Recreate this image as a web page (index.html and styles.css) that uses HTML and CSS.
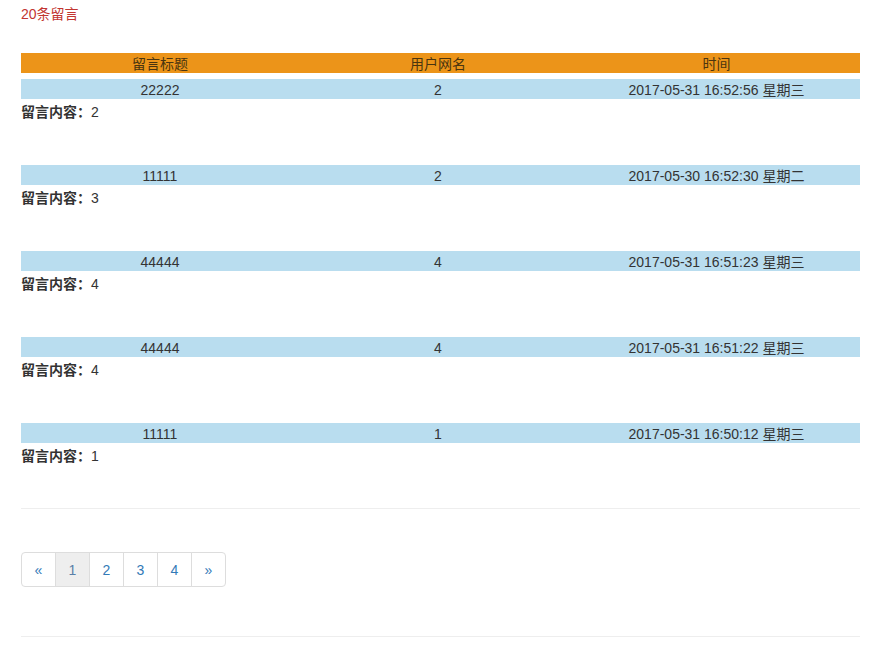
FILE: index.html
```html
<!DOCTYPE html>
<html lang="zh-CN">
<head>
<meta charset="utf-8">
<title>留言</title>
<link rel="stylesheet" href="styles.css">
</head>
<body>
<div class="page">
  <div class="count">20条留言</div>
  <div class="board">
    <div class="cols head"><span>留言标题</span><span>用户网名</span><span>时间</span></div>
    <div class="msg">
      <div class="cols row"><span>22222</span><span>2</span><span>2017-05-31 16:52:56 星期三</span></div>
      <div class="content"><b>留言内容：</b>2</div>
    </div>
    <div class="msg">
      <div class="cols row"><span>11111</span><span>2</span><span>2017-05-30 16:52:30 星期二</span></div>
      <div class="content"><b>留言内容：</b>3</div>
    </div>
    <div class="msg">
      <div class="cols row"><span>44444</span><span>4</span><span>2017-05-31 16:51:23 星期三</span></div>
      <div class="content"><b>留言内容：</b>4</div>
    </div>
    <div class="msg">
      <div class="cols row"><span>44444</span><span>4</span><span>2017-05-31 16:51:22 星期三</span></div>
      <div class="content"><b>留言内容：</b>4</div>
    </div>
    <div class="msg">
      <div class="cols row"><span>11111</span><span>1</span><span>2017-05-31 16:50:12 星期三</span></div>
      <div class="content last"><b>留言内容：</b>1</div>
    </div>
  </div>
  <hr class="rule">
  <ul class="pager">
    <li><a href="#">&laquo;</a></li>
    <li class="active"><a href="#">1</a></li>
    <li><a href="#">2</a></li>
    <li><a href="#">3</a></li>
    <li><a href="#">4</a></li>
    <li><a href="#">&raquo;</a></li>
  </ul>
  <hr class="rule">
</div>
</body>
</html>
```

FILE: styles.css
```css
html, body {
  margin: 0;
  padding: 0;
  background: #fff;
}
body {
  font-family: "Liberation Sans", "Noto Sans CJK SC", Arial, sans-serif;
  font-size: 14px;
  line-height: 20px;
  color: #333;
}
.page {
  padding: 4px 35px 0 21px;
}
.count {
  color: #c23531;
  height: 20px;
}
.board {
  margin-top: 29px;
}
.cols {
  display: grid;
  grid-template-columns: 278px 278px 1fr;
  height: 19px;
  padding-top: 1px;
  line-height: 20px;
  overflow: hidden;
}
.cols span {
  text-align: center;
  white-space: nowrap;
}
.cols span:last-child {
  padding-right: 4px;
}
.head {
  background: #ec9419;
  color: #4a3510;
  margin-bottom: 6px;
}
.row {
  background: #b9ddef;
}
.content {
  height: 63px;
  padding-top: 3px;
  line-height: 20px;
}
.content.last {
  height: 62px;
}
.content b {
  font-weight: bold;
}
.rule {
  border: 0;
  border-top: 1px solid #eee;
  height: 0;
  margin: 0;
}
.pager {
  list-style: none;
  display: flex;
  padding: 0;
  margin: 43px 0 49px 0;
}
.pager li a {
  display: block;
  padding: 7px 12.6px 6px;
  line-height: 20px;
  border: 1px solid #ddd;
  margin-left: -1px;
  color: #337ab7;
  text-decoration: none;
  background: #fff;
}
.pager li:first-child a {
  margin-left: 0;
  border-radius: 4px 0 0 4px;
}
.pager li:last-child a {
  border-radius: 0 4px 4px 0;
}
.pager li.active a {
  background: #eee;
  color: #5a7fa8;
}
```
